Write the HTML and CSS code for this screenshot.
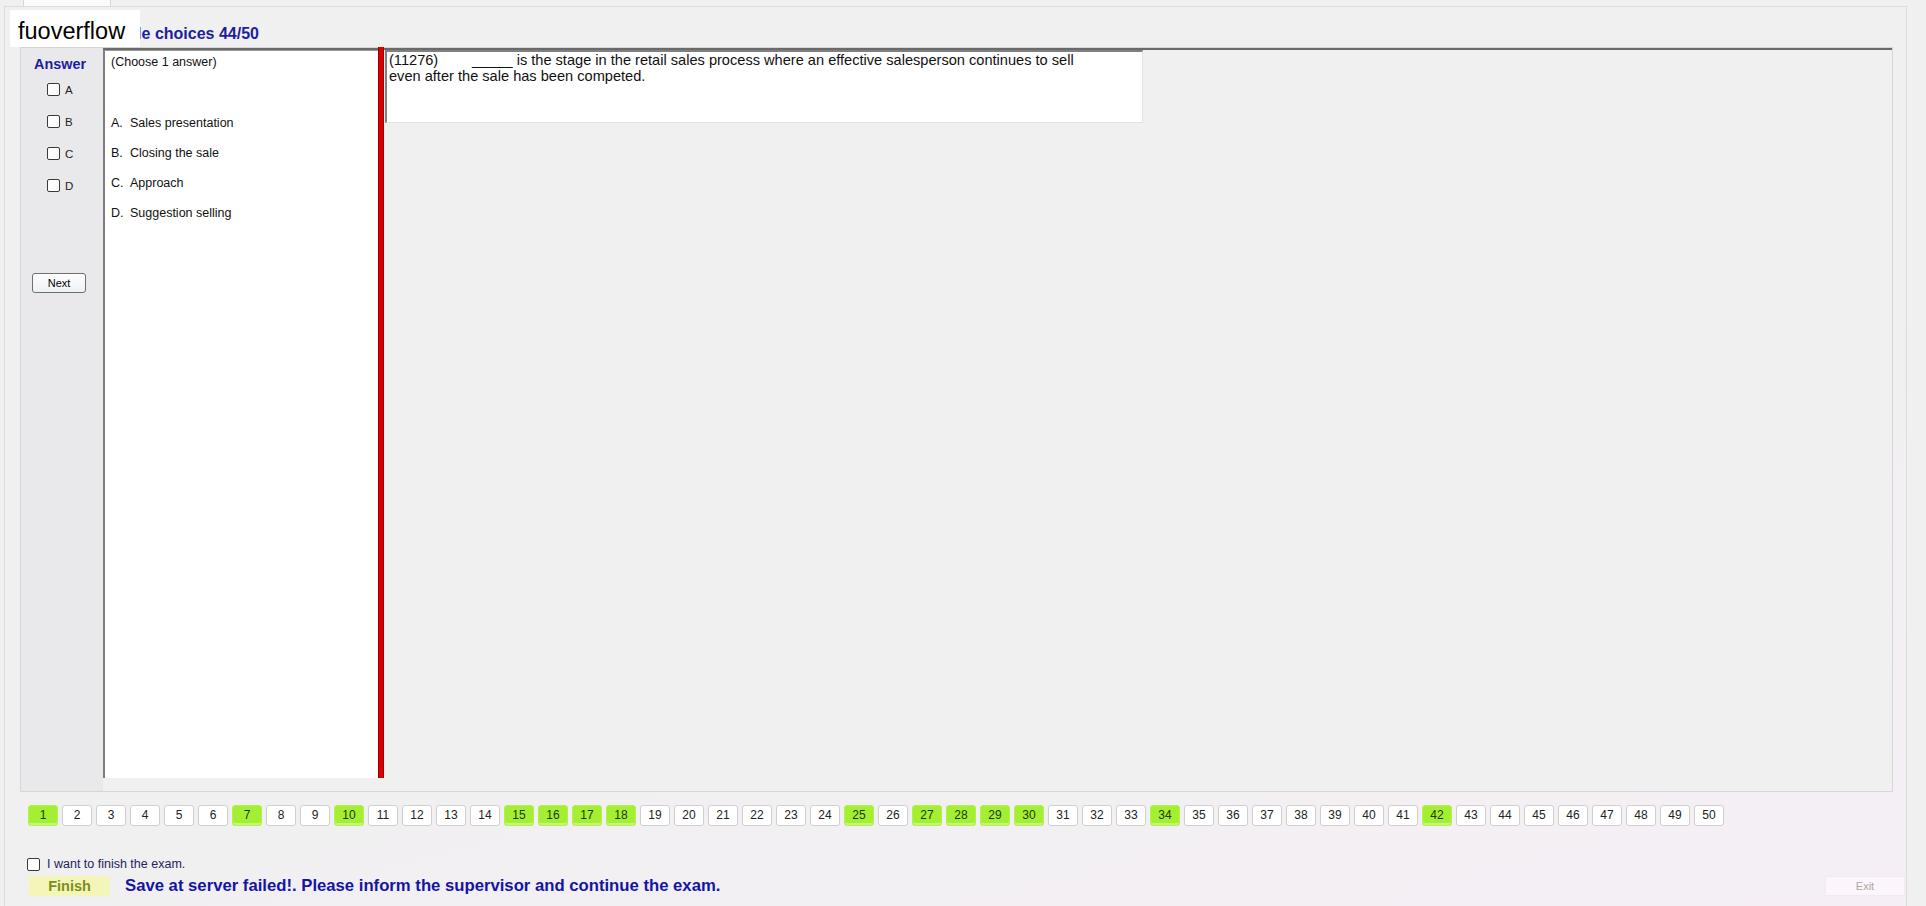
FILE: index.html
```html
<!DOCTYPE html>
<html lang="en">
<head>
    <meta charset="UTF-8">
    <meta name="viewport" content="width=device-width, initial-scale=1.0">
    <title>Exam</title>
    <link rel="stylesheet" href="styles.css">
</head>
<body>
    <div class="tabs"><div class="tab"></div></div>

    <div class="tab-page">
        <div class="header">Multiple choices 44/50</div>

        <div class="exam-frame">
            <div class="answer-col">
                <div class="answer-title">Answer</div>
                <label class="ans-row first"><input type="checkbox" class="cb"><span>A</span></label>
                <label class="ans-row"><input type="checkbox" class="cb"><span>B</span></label>
                <label class="ans-row"><input type="checkbox" class="cb"><span>C</span></label>
                <label class="ans-row"><input type="checkbox" class="cb"><span>D</span></label>
                <button class="next-btn">Next</button>
            </div>

            <div class="content">
                <div class="choices">
                    <div class="choose-note">(Choose 1 answer)</div>
                    <div class="option first"><span class="opt-key">A.</span>Sales presentation</div>
                    <div class="option"><span class="opt-key">B.</span>Closing the sale</div>
                    <div class="option"><span class="opt-key">C.</span>Approach</div>
                    <div class="option"><span class="opt-key">D.</span>Suggestion selling</div>
                </div>
                <div class="red-bar"></div>
                <div class="question-area">
                    <div class="question-box">
                        <span class="qid">(11276)</span>_____ is the stage in the retail sales process where an effective salesperson continues to sell<br>
                        even after the sale has been competed.
                    </div>
                </div>
            </div>
        </div>

        <div class="bottom">
            <div id="navRow" class="nav-row"></div>

            <label class="finish-check">
                <input type="checkbox" class="cb">
                <span>I want to finish the exam.</span>
            </label>

            <div class="finish-row">
                <button class="finish-btn">Finish</button>
                <span class="save-msg">Save at server failed!. Please inform the supervisor and continue the exam.</span>
                <button class="exit-btn">Exit</button>
            </div>
        </div>
    </div>

    <div class="watermark">fuoverflow</div>

    <script>
        // questions already answered
        const answered = [1, 7, 10, 15, 16, 17, 18, 25, 27, 28, 29, 30, 34, 42];
        const navRow = document.getElementById('navRow');

        for (let i = 1; i <= 50; i++) {
            const btn = document.createElement('button');
            btn.className = answered.includes(i) ? 'num done' : 'num';
            btn.textContent = i;
            navRow.appendChild(btn);
        }
    </script>
</body>
</html>
```

FILE: styles.css
```css
* {
    box-sizing: border-box;
}
body {
    margin: 0;
    width: 1926px;
    height: 906px;
    overflow: hidden;
    position: relative;
    background-color: #f0f0f0;
    font-family: "Liberation Sans", Arial, sans-serif;
    color: #000;
}
button {
    font-family: "Liberation Sans", Arial, sans-serif;
    padding: 0;
    cursor: pointer;
}
.tabs {
    height: 6px;
}
.tab {
    margin-left: 23px;
    width: 88px;
    height: 6px;
    background-color: #fbfbfb;
    border: 1px solid #d8d8d8;
    border-top: none;
    border-bottom: none;
}
.tab-page {
    margin-left: 4px;
    width: 1903px;
    height: 900px;
    border: 1px solid #dcdcdc;
    border-bottom: none;
    background: linear-gradient(165deg, #f0f0f0 55%, #f5eff5 100%);
}
.header {
    height: 40px;
    padding: 18px 0 0 85px;
    font-size: 16px;
    line-height: 18px;
    font-weight: bold;
    color: #1e1e9e;
}
.exam-frame {
    display: flex;
    margin-left: 15px;
    width: 1873px;
    height: 745px;
    border: 1px solid #d6d6d6;
    background-color: #f0f0f0;
}
.answer-col {
    width: 82px;
    padding-top: 7.5px;
    background-color: #e9e9ec;
}
.answer-title {
    padding-left: 13px;
    font-size: 14.4px;
    line-height: 17px;
    font-weight: bold;
    color: #1d1d9c;
}
.ans-row {
    display: flex;
    align-items: center;
    height: 13px;
    margin-top: 19px;
    padding-left: 26px;
    font-size: 11.5px;
    color: #222;
}
.ans-row.first {
    margin-top: 10.5px;
}
.ans-row span {
    margin-left: 5px;
}
.cb {
    appearance: none;
    -webkit-appearance: none;
    width: 13px;
    height: 13px;
    margin: 0;
    border: 1px solid #3a3a3a;
    border-radius: 2px;
    background-color: #fff;
}
.next-btn {
    display: block;
    margin: 81px 0 0 11px;
    width: 54px;
    height: 20px;
    border: 1px solid #6f6f6f;
    border-radius: 3px;
    background: linear-gradient(#fdfdfd, #eef2f5);
    font-size: 11px;
    color: #000;
}
.content {
    flex: 1;
    display: flex;
    border-top: 2px solid #6a6a6a;
    padding-bottom: 13px;
}
.choices {
    width: 275px;
    padding: 4px 6px;
    background-color: #fff;
    border-left: 2px solid #7d7d7d;
    border-top: 1px solid #9a9a9a;
    font-size: 12.5px;
    line-height: 15px;
    color: #111;
}
.option {
    margin-top: 15px;
}
.option.first {
    margin-top: 46px;
}
.opt-key {
    display: inline-block;
    width: 19px;
}
.red-bar {
    width: 6px;
    margin-top: -3px;
    background-color: #dc0000;
    border-left: 1px solid #960000;
    border-right: 1px solid #a40000;
}
.question-area {
    flex: 1;
    padding-left: 1px;
}
.question-box {
    width: 758px;
    height: 73px;
    padding: 0 2px;
    background-color: #fff;
    border-top: 2px solid #808080;
    border-left: 2px solid #808080;
    border-right: 1px solid #e2e2e2;
    border-bottom: 1px solid #e2e2e2;
    font-size: 14.6px;
    line-height: 16px;
    color: #111;
}
.qid {
    display: inline-block;
    width: 83px;
}
.bottom {
    padding-left: 23px;
}
.nav-row {
    display: flex;
    gap: 4px;
    margin-top: 13px;
}
.num {
    width: 30px;
    height: 21px;
    border: 1px solid #cfcfcf;
    border-radius: 3px;
    background-color: #fff;
    font-size: 12px;
    line-height: 19px;
    color: #222;
    text-align: center;
}
.num.done {
    background-color: #a5ef33;
    border-color: #b4f050;
    box-shadow: inset 0 -2px 0 #c4f57e;
    color: #1e3a00;
}
.finish-check {
    display: flex;
    align-items: center;
    height: 14px;
    margin: 31px 0 0 -1px;
    font-size: 12.5px;
    color: #23235c;
}
.finish-check span {
    margin-left: 7px;
}
.finish-row {
    display: flex;
    align-items: center;
    height: 20px;
    margin-top: 5px;
    padding-left: 1px;
}
.finish-btn {
    width: 81px;
    height: 20px;
    border: none;
    background-color: #f3f6b8;
    font-size: 14.5px;
    font-weight: bold;
    color: #7d8d1b;
}
.save-msg {
    margin-left: 15px;
    font-size: 16.7px;
    font-weight: bold;
    color: #1515a5;
}
.exit-btn {
    margin-left: auto;
    margin-right: 1px;
    width: 80px;
    height: 20px;
    border: 1px solid #f3e8f3;
    background-color: #fcf5fc;
    font-size: 11px;
    color: #a8a8a8;
}
.watermark {
    position: absolute;
    left: 10px;
    top: 10px;
    width: 130px;
    height: 37px;
    padding: 6px 0 0 8px;
    background-color: #fff;
    font-size: 23.5px;
    line-height: 31px;
    color: #000;
}
```
